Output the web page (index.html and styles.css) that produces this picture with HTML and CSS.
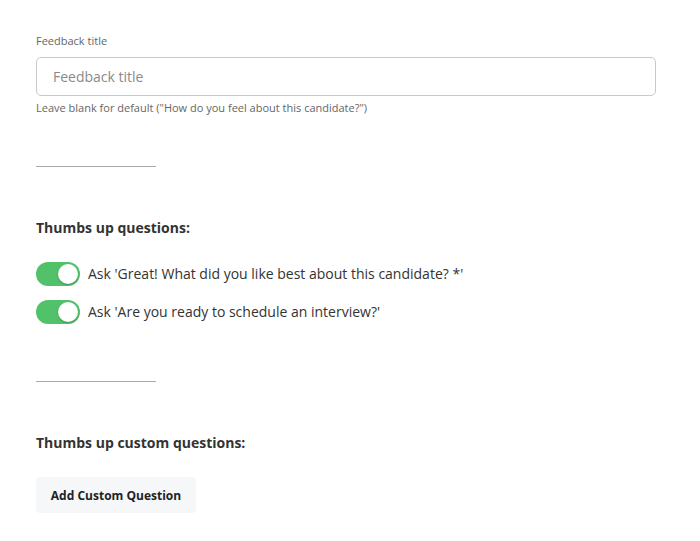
FILE: index.html
```html
<!DOCTYPE html>
<html>
<head>
<meta charset="utf-8">
<link rel="stylesheet" href="styles.css">
</head>
<body>
<div class="page">
  <div class="field">
    <label class="label">Feedback title</label>
    <input class="input" type="text" placeholder="Feedback title">
    <div class="help">Leave blank for default ("How do you feel about this candidate?")</div>
  </div>
  <hr class="divider">
  <h3 class="section-title">Thumbs up questions:</h3>
  <div class="toggle-list">
    <div class="toggle-row">
      <span class="toggle"><span class="knob"></span></span>
      <span class="toggle-text">Ask 'Great! What did you like best about this candidate? *'</span>
    </div>
    <div class="toggle-row">
      <span class="toggle"><span class="knob"></span></span>
      <span class="toggle-text">Ask 'Are you ready to schedule an interview?'</span>
    </div>
  </div>
  <hr class="divider divider-2">
  <h3 class="section-title section-title-2">Thumbs up custom questions:</h3>
  <button class="btn">Add Custom Question</button>
</div>
</body>
</html>
```

FILE: styles.css
```css
html, body {
  margin: 0;
  padding: 0;
  background: #fff;
}
body {
  font-family: "Open Sans", "Liberation Sans", sans-serif;
  color: #333;
}
.page {
  padding: 33px 44px 0 36px;
}
.field {
  display: flex;
  flex-direction: column;
}
.label {
  font-size: 11px;
  line-height: 15px;
  color: #666;
  font-weight: 400;
  margin-bottom: 9px;
}
.input {
  box-sizing: border-box;
  height: 39px;
  width: 100%;
  border: 1px solid #c8c8c8;
  border-radius: 5px;
  padding: 0 16px;
  font-family: inherit;
  font-size: 14px;
  color: #333;
  outline: none;
}
.input::placeholder {
  color: #8a8a8a;
}
.help {
  margin-top: 4px;
  font-size: 11px;
  line-height: 15px;
  color: #666;
}
.divider {
  width: 120px;
  margin: 51px 0 0 0;
  border: 0;
  border-top: 1px solid #aaa;
  height: 0;
}
.divider-2 {
  margin-top: 57px;
}
.section-title {
  margin: 51px 0 0 0;
  font-size: 14px;
  line-height: 20px;
  font-weight: 700;
  color: #333;
}
.section-title-2 {
  margin-top: 51px;
}
.toggle-list {
  margin-top: 24px;
  display: flex;
  flex-direction: column;
  gap: 14px;
}
.toggle-row {
  display: flex;
  align-items: center;
  gap: 8px;
}
.toggle {
  position: relative;
  display: inline-block;
  width: 44px;
  height: 24px;
  border-radius: 12px;
  background: #52c26a;
  flex: none;
}
.knob {
  position: absolute;
  top: 2px;
  right: 2px;
  width: 20px;
  height: 20px;
  border-radius: 50%;
  background: #fff;
  box-shadow: 0 1px 2px rgba(0,0,0,0.25);
}
.toggle-text {
  font-size: 14px;
  line-height: 20px;
  color: #333;
}
.btn {
  margin-top: 24px;
  width: 160px;
  height: 36px;
  border: 0;
  border-radius: 4px;
  background: #f6f7f9;
  font-family: inherit;
  font-size: 12px;
  font-weight: 700;
  color: #222;
  padding: 0;
}
```
